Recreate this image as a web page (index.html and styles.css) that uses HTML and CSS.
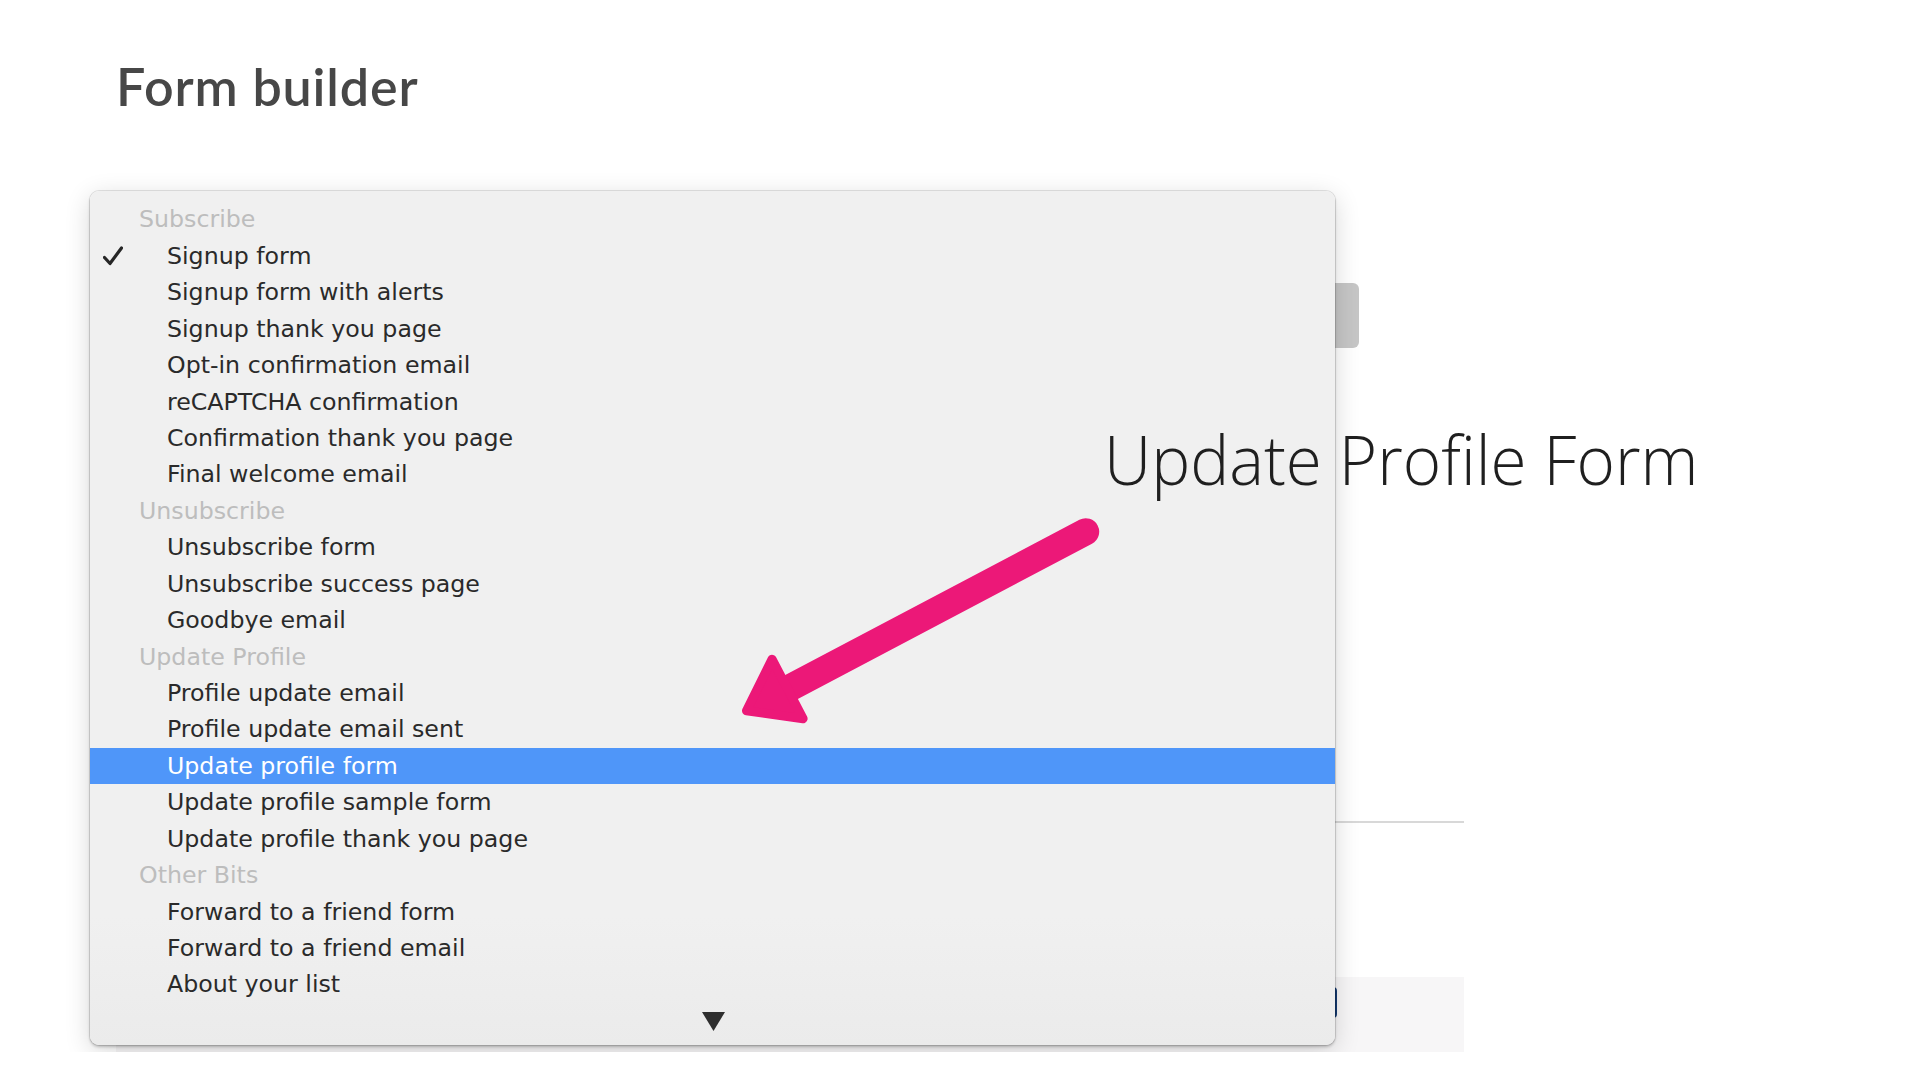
FILE: index.html
```html
<!DOCTYPE html>
<html lang="en">
<head>
<meta charset="utf-8">
<title>Form builder</title>
<link rel="stylesheet" href="styles.css">
</head>
<body>
<div class="screen">
  <div class="page">
    <h1 class="title">Form builder</h1>
    <div class="select-bar"></div>
    <div class="divider"></div>
    <div class="footer-box">
      <div class="navy-btn"></div>
    </div>
  </div>

  <div class="menu">
    <div class="menu-list">
      <div class="row header">Subscribe</div>
      <div class="row item checked"><span class="check"><svg viewBox="0 0 20 20" width="20" height="20"><path d="M1.5 11.5 L7 17.5 L18.5 2" fill="none" stroke="#262626" stroke-width="3.2" stroke-linecap="round" stroke-linejoin="round"/></svg></span>Signup form</div>
      <div class="row item">Signup form with alerts</div>
      <div class="row item">Signup thank you page</div>
      <div class="row item">Opt-in confirmation email</div>
      <div class="row item">reCAPTCHA confirmation</div>
      <div class="row item">Confirmation thank you page</div>
      <div class="row item">Final welcome email</div>
      <div class="row header">Unsubscribe</div>
      <div class="row item">Unsubscribe form</div>
      <div class="row item">Unsubscribe success page</div>
      <div class="row item">Goodbye email</div>
      <div class="row header">Update Profile</div>
      <div class="row item">Profile update email</div>
      <div class="row item">Profile update email sent</div>
      <div class="row item selected">Update profile form</div>
      <div class="row item">Update profile sample form</div>
      <div class="row item">Update profile thank you page</div>
      <div class="row header">Other Bits</div>
      <div class="row item">Forward to a friend form</div>
      <div class="row item">Forward to a friend email</div>
      <div class="row item">About your list</div>
    </div>
    <div class="scroll-down">
      <svg viewBox="0 0 23 19" width="23" height="19"><path d="M0 0 H23 L11.5 19 Z" fill="#2e2e2e"/></svg>
    </div>
  </div>

  <div class="callout">Update Profile Form</div>

  <svg class="arrow" viewBox="0 0 400 240" width="400" height="240">
    <line x1="365.7" y1="31.7" x2="72" y2="186.7" stroke="#ec1878" stroke-width="27" stroke-linecap="round"/>
    <polygon points="26.5,210.7 52,159.2 83.1,218.7" fill="#ec1878" stroke="#ec1878" stroke-width="9" stroke-linejoin="round"/>
  </svg>
</div>
</body>
</html>
```

FILE: styles.css
```css
html, body {
  margin: 0;
  padding: 0;
  background: #ffffff;
}

body {
  width: 1920px;
  height: 1080px;
  overflow: hidden;
  font-family: "DejaVu Sans", "Liberation Sans", sans-serif;
}

.screen {
  position: relative;
  height: 1052px;
  overflow: hidden;
}

.page {
  padding-left: 116px;
  padding-top: 59.5px;
  width: 1348px;
}

.title {
  margin: 0;
  font-family: Lato, "Open Sans", sans-serif;
  font-weight: 600;
  font-size: 52px;
  line-height: 52px;
  color: #474747;
  letter-spacing: 0.85px;
}

.select-bar {
  margin-top: 171.2px;
  height: 65.6px;
  width: 1242.5px;
  background: #c6c6c6;
  border-radius: 6px;
}

.divider {
  margin-top: 472.7px;
  height: 2px;
  background: #d8d8d8;
}

.footer-box {
  margin-top: 154px;
  height: 75px;
  background: #f7f6f7;
  display: flex;
  justify-content: flex-end;
  align-items: flex-start;
  padding-top: 10px;
  padding-right: 127px;
  box-sizing: border-box;
}

.navy-btn {
  width: 220px;
  height: 31px;
  background: #143a72;
  border-radius: 4px;
}

/* dropdown menu overlay */
.menu {
  position: absolute;
  left: 90px;
  top: 190.7px;
  width: 1245px;
  height: 854.6px;
  box-sizing: border-box;
  padding-top: 10.6px;
  background: linear-gradient(#f0f0f0 0%, #f0f0f0 85%, #ebebeb 100%);
  border-radius: 9px;
  box-shadow: 0 0 0 1px rgba(0, 0, 0, 0.10), 0 2px 3px rgba(0, 0, 0, 0.22), 0 6px 26px rgba(0, 0, 0, 0.16);
  display: flex;
  flex-direction: column;
}

.row {
  height: 36.43px;
  display: flex;
  align-items: center;
  font-size: 23.7px;
  white-space: nowrap;
}

.header {
  padding-left: 49px;
  color: #bdbdbd;
}

.item {
  padding-left: 77px;
  color: #2a2a2a;
}

.item.checked {
  padding-left: 13px;
}

.check {
  width: 64px;
  display: flex;
  align-items: center;
}

.check svg {
  display: block;
}

.selected {
  background: #4f96f9;
  color: #ffffff;
}

.scroll-down {
  flex: 1;
  display: flex;
  align-items: center;
  justify-content: center;
  padding-left: 2px;
  padding-bottom: 4px;
}

.scroll-down svg {
  display: block;
}

/* annotation overlay */
.callout {
  position: absolute;
  left: 1104px;
  top: 424px;
  font-family: "Open Sans", "Noto Sans", sans-serif;
  font-weight: 300;
  font-size: 69px;
  line-height: 69px;
  color: #1f1f1f;
  white-space: nowrap;
  transform: scaleX(0.95);
  transform-origin: left center;
}

.arrow {
  position: absolute;
  left: 720px;
  top: 500px;
  display: block;
}
```
